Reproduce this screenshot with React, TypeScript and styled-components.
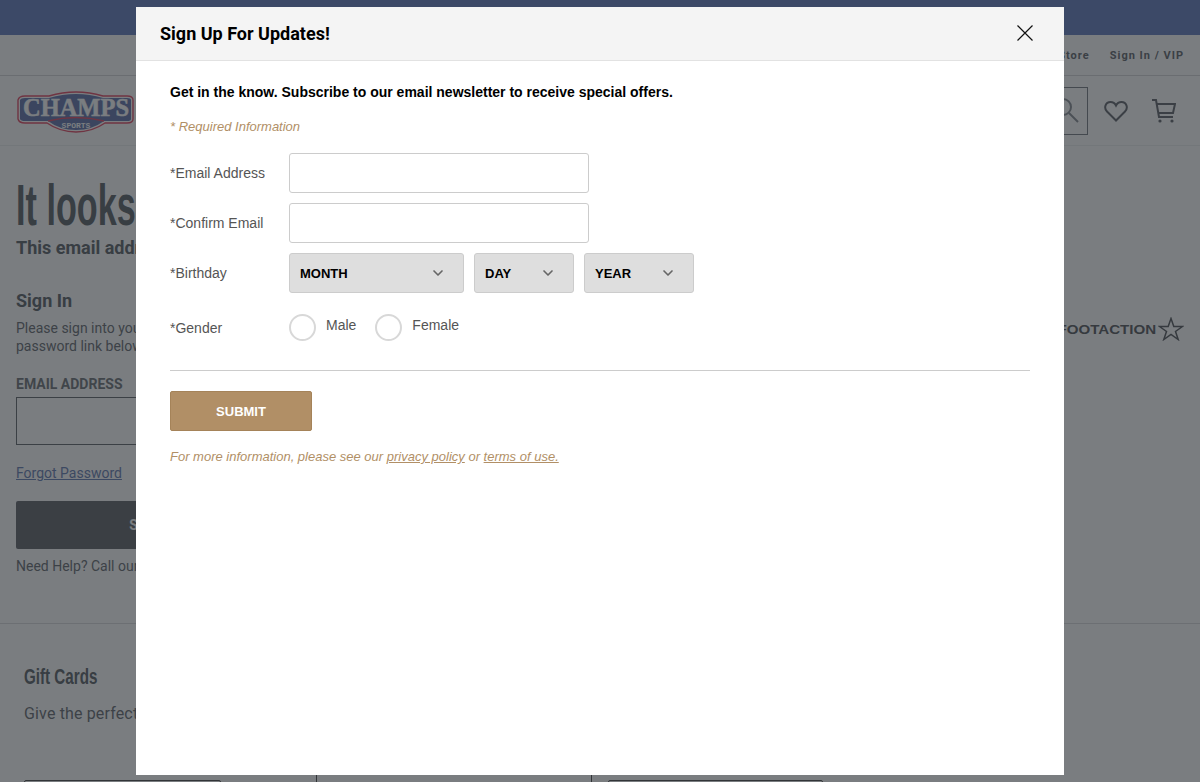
import React from 'react';
import styled, { createGlobalStyle } from 'styled-components';
import { ChevronDown } from 'lucide-react';

const Global = createGlobalStyle`
  html, body { margin: 0; padding: 0; height: 100%; overflow: hidden; background: #fff; }
  * { box-sizing: border-box; }
`;

const Page = styled.div`
  width: 1200px;
  height: 782px;
  overflow: hidden;
  font-family: Roboto, "Liberation Sans", sans-serif;
  color: #444a52;
`;

const Promo = styled.div`
  height: 35px;
  background: #4d6ab8;
`;

const Utility = styled.div`
  height: 41px;
  padding: 0 16px 0 0;
  display: flex;
  align-items: center;
  justify-content: flex-end;
  gap: 20px;
  border-bottom: 1px solid #d0d2d4;
  font-size: 11px;
  font-weight: 700;
  letter-spacing: 1px;
  color: #4a4f57;
`;

const MainNav = styled.div`
  height: 70px;
  padding: 0 24px 0 17px;
  display: flex;
  align-items: center;
  justify-content: space-between;
  border-bottom: 1px solid #eceded;
`;

const NavTools = styled.div`
  display: flex;
  align-items: center;
`;

const SearchBox = styled.div`
  width: 200px;
  height: 48px;
  margin-right: 16px;
  padding-right: 7px;
  border: 1px solid #666b72;
  display: flex;
  align-items: center;
  justify-content: flex-end;
`;

const IconGap = styled.div`
  display: flex;
  align-items: center;
  gap: 24px;
`;

const Content = styled.main`
  height: 478px;
  padding: 0 16px;
  display: flex;
  justify-content: space-between;
  border-bottom: 1px solid #d6d7d9;
`;

const Account = styled.section`
  width: 276px;
  padding-top: 30px;
  white-space: nowrap;
`;

const Headline = styled.h1`
  margin: 0;
  width: max-content;
  height: 58px;
  font-family: "Liberation Sans", sans-serif;
  font-size: 57px;
  line-height: 58px;
  font-weight: 700;
  transform: scaleX(0.6);
  transform-origin: left center;
  color: #444a52;
`;

const Subhead = styled.h2`
  margin: 2px 0 0;
  font-size: 18px;
  line-height: 24px;
  font-weight: 700;
`;

const SignInTitle = styled.h3`
  margin: 29px 0 0;
  font-size: 18px;
  line-height: 24px;
  font-weight: 700;
`;

const Intro = styled.p`
  margin: 6px 0 0;
  font-size: 14px;
  line-height: 18px;
  color: #50555c;
`;

const FieldLabel = styled.div`
  margin-top: 20px;
  font-size: 14px;
  line-height: 18px;
  font-weight: 700;
  color: #5a5f66;
`;

const AccountInput = styled.div`
  height: 48px;
  margin-top: 4px;
  border: 1px solid #4c5157;
`;

const Forgot = styled.a`
  display: block;
  margin-top: 19px;
  font-size: 14px;
  line-height: 18px;
  color: #4f6aa8;
  text-decoration: underline;
`;

const DarkButton = styled.div`
  height: 48px;
  margin-top: 19px;
  border-radius: 2px;
  background: #4a4e55;
  color: #fff;
  font-size: 14px;
  font-weight: 700;
  display: flex;
  align-items: center;
  justify-content: center;
`;

const Help = styled.p`
  margin: 8px 0 0;
  font-size: 14px;
  line-height: 18px;
  color: #50555c;
`;

const Banners = styled.aside`
  margin-top: 171px;
  display: flex;
  align-items: center;
  height: 24px;
  white-space: nowrap;
`;

const FootactionName = styled.span`
  margin-right: 2px;
  font-family: "Liberation Sans", sans-serif;
  font-size: 13.5px;
  font-weight: 700;
  transform: scaleX(1.12);
  transform-origin: right center;
  color: #3c4046;
`;

const Footer = styled.footer`
  padding: 38px 24px 0;
`;

const GiftTitle = styled.h3`
  margin: 0;
  height: 30px;
  font-family: "Liberation Sans", sans-serif;
  font-size: 22px;
  line-height: 30px;
  font-weight: 700;
  white-space: nowrap;
  transform: scaleX(0.69);
  transform-origin: left center;
  color: #444a52;
`;

const GiftText = styled.p`
  margin: 10px 0 0;
  font-size: 16px;
  line-height: 24px;
  letter-spacing: 0.15px;
  color: #50555c;
`;

const FooterRow = styled.div`
  margin-top: 41px;
  display: flex;
`;

const GiftInput = styled.div<{ $width: number; $left: number }>`
  width: ${(p) => p.$width}px;
  margin-left: ${(p) => p.$left}px;
  margin-top: 13px;
  height: 30px;
  border: 1px solid #333;
  border-radius: 2px;
`;

const GiftDivider = styled.div<{ $left: number }>`
  width: 1px;
  height: 30px;
  margin-left: ${(p) => p.$left}px;
  background: #333;
`;

const Overlay = styled.div`
  position: fixed;
  inset: 0;
  background: rgba(50, 55, 60, 0.65);
`;

const Modal = styled.div`
  position: fixed;
  left: 136px;
  top: 7px;
  width: 928px;
  height: 768px;
  background: #fff;
  font-family: "Liberation Sans", Arial, sans-serif;
`;

const ModalHeader = styled.header`
  height: 54px;
  padding: 0 31px 0 24px;
  display: flex;
  align-items: center;
  justify-content: space-between;
  background: #f4f4f4;
  border-bottom: 1px solid #e2e2e2;
`;

const ModalTitle = styled.h2`
  margin: 0;
  font-family: Roboto, sans-serif;
  font-size: 18px;
  font-weight: 700;
  color: #000;
`;

const CloseIcon = styled.svg`
  display: block;
  width: 16px;
  height: 16px;
  margin-bottom: 2px;
`;

const ModalBody = styled.div`
  padding: 23px 34px 0;
`;

const Lead = styled.p`
  margin: 0;
  font-size: 14px;
  line-height: 16px;
  font-weight: 700;
  color: #000;
`;

const Required = styled.p`
  margin: 19px 0 0;
  font-size: 13px;
  line-height: 16px;
  font-style: italic;
  color: #b18f66;
`;

const FormRows = styled.div`
  margin-top: 18px;
  display: flex;
  flex-direction: column;
  gap: 10px;
`;

const FormRow = styled.div`
  display: flex;
  align-items: center;
  min-height: 40px;
`;

const FormLabel = styled.label`
  width: 119px;
  font-size: 14px;
  color: #555;
`;

const TextInput = styled.input`
  width: 300px;
  height: 40px;
  padding: 0 10px;
  background: #fff;
  border: 1px solid #ccc;
  border-radius: 3px;
  outline: none;
`;

const SelectGroup = styled.div`
  display: flex;
  gap: 10px;
`;

const SelectBox = styled.div<{ $width: number }>`
  width: ${(p) => p.$width}px;
  height: 40px;
  padding: 0 17px 0 10px;
  display: flex;
  align-items: center;
  justify-content: space-between;
  background: #dedede;
  border: 1px solid #ccc;
  border-radius: 3px;
  font-size: 13px;
  font-weight: 700;
  color: #000;
`;

const GenderRow = styled(FormRow)`
  margin-top: 11px;
  min-height: 27px;
`;

const RadioOption = styled.label`
  display: flex;
  align-items: flex-start;
  margin-right: 19px;
  font-size: 14px;
  line-height: 16px;
  color: #555;
`;

const RadioCircle = styled.span`
  width: 27px;
  height: 27px;
  margin-right: 10px;
  background: #fff;
  border: 2px solid #d8d8d8;
  border-radius: 50%;
`;

const RadioText = styled.span`
  margin-top: 3px;
`;

const Divider = styled.hr`
  margin: 29px 0 20px;
  border: 0;
  border-top: 1px solid #ccc;
`;

const SubmitButton = styled.button`
  display: block;
  width: 142px;
  height: 40px;
  padding: 0;
  background: #b18f66;
  border: 1px solid #a58359;
  border-radius: 2px;
  color: #fff;
  font-family: "Liberation Sans", Arial, sans-serif;
  font-size: 13px;
  font-weight: 700;
`;

const Note = styled.p`
  margin: 18px 0 0;
  font-size: 13px;
  line-height: 16px;
  font-style: italic;
  color: #b18f66;

  a {
    color: inherit;
    text-decoration: underline;
  }
`;

const ChampsLogo = () => (
  <svg width="118" height="44" viewBox="0 0 118 44">
    <path d="M1 11 Q2 7 8 7 L32 7 Q59 -1 86 7 L110 7 Q116 7 116 11 L116 30 Q116 34 110 34 L88 34 Q75 43 59 43 Q43 43 30 34 L8 34 Q2 34 1 30 Z" fill="#fff" stroke="#e0304f" strokeWidth="1.4" />
    <path d="M3 11 Q4 9 8 9 L32 9 Q59 1 86 9 L110 9 Q114 9 114 11 L114 30 Q114 32 110 32 L87 32 Q75 41 59 41 Q43 41 31 32 L8 32 Q4 32 3 30 Z" fill="#4a60a0" />
    <path d="M31 32 Q59 25 87 32" fill="none" stroke="#e0304f" strokeWidth="1.4" />
    <text x="59" y="27" textAnchor="middle" fontFamily="'Liberation Serif', serif" fontWeight="700" fontSize="26" textLength="106" lengthAdjust="spacingAndGlyphs" fill="#fff" stroke="#fff" strokeWidth="0.5">CHAMPS</text>
    <text x="59" y="38.5" textAnchor="middle" fontFamily="'Liberation Mono', monospace" fontWeight="700" fontSize="8" fill="#fff">SPORTS</text>
  </svg>
);

const SearchIcon = () => (
  <svg width="26" height="30" viewBox="0 0 26 30" fill="none" stroke="#7a7f86" strokeWidth="2">
    <circle cx="9" cy="11" r="8" />
    <path d="M15 17 L24 26" />
  </svg>
);

const HeartIcon = () => (
  <svg width="24" height="22" viewBox="0 0 24 22" fill="none" stroke="#4a4f57" strokeWidth="2">
    <path d="M12 20.5 L3 11.5 C-0.5 8 1.5 2 6.5 2 C9 2 11 3.4 12 5.5 C13 3.4 15 2 17.5 2 C22.5 2 24.5 8 21 11.5 Z" />
  </svg>
);

const CartIcon = () => (
  <svg width="24" height="24" viewBox="0 0 24 24" fill="none" stroke="#4a4f57" strokeWidth="2">
    <path d="M0 1 H4 L7 18 H21" />
    <path d="M5 5 H23 L21 14 H6.5" />
    <circle cx="8" cy="22" r="1.6" fill="#4a4f57" stroke="none" />
    <circle cx="20" cy="22" r="1.6" fill="#4a4f57" stroke="none" />
  </svg>
);

const StarIcon = () => (
  <svg width="26" height="24" viewBox="0 0 26 24" fill="none" stroke="#3c4046" strokeWidth="1.5">
    <path d="M13 1.5 L15.8 9.5 L24.5 9.5 L17.5 14.5 L20.2 22.5 L13 17.5 L5.8 22.5 L8.5 14.5 L1.5 9.5 L10.2 9.5 Z" />
  </svg>
);

const selects = [
  { label: 'MONTH', width: 175 },
  { label: 'DAY', width: 100 },
  { label: 'YEAR', width: 110 },
];

export default function App() {
  return (
    <Page>
      <Global />
      <Promo />
      <Utility>
        <span>Find a Store</span>
        <span>Sign In / VIP</span>
      </Utility>
      <MainNav>
        <ChampsLogo />
        <NavTools>
          <SearchBox>
            <SearchIcon />
          </SearchBox>
          <IconGap>
            <HeartIcon />
            <CartIcon />
          </IconGap>
        </NavTools>
      </MainNav>
      <Content>
        <Account>
          <Headline>It looks</Headline>
          <Subhead>This email address</Subhead>
          <SignInTitle>Sign In</SignInTitle>
          <Intro>
            Please sign into your
            <br />
            password link below
          </Intro>
          <FieldLabel>EMAIL ADDRESS</FieldLabel>
          <AccountInput />
          <Forgot>Forgot Password</Forgot>
          <DarkButton>SIGN IN</DarkButton>
          <Help>Need Help? Call our</Help>
        </Account>
        <Banners>
          <FootactionName>FOOTACTION</FootactionName>
          <StarIcon />
        </Banners>
      </Content>
      <Footer>
        <GiftTitle>Gift Cards</GiftTitle>
        <GiftText>Give the perfect gift</GiftText>
        <FooterRow>
          <GiftInput $width={197} $left={0} />
          <GiftDivider $left={95} />
          <GiftDivider $left={274} />
          <GiftInput $width={215} $left={16} />
        </FooterRow>
      </Footer>
      <Overlay />
      <Modal>
        <ModalHeader>
          <ModalTitle>Sign Up For Updates!</ModalTitle>
          <CloseIcon viewBox="0 0 16 16" fill="none" stroke="#111" strokeWidth="1.2">
            <path d="M0.5 0.5 L15.5 15.5 M15.5 0.5 L0.5 15.5" />
          </CloseIcon>
        </ModalHeader>
        <ModalBody>
          <Lead>Get in the know. Subscribe to our email newsletter to receive special offers.</Lead>
          <Required>* Required Information</Required>
          <FormRows>
            <FormRow>
              <FormLabel>*Email Address</FormLabel>
              <TextInput />
            </FormRow>
            <FormRow>
              <FormLabel>*Confirm Email</FormLabel>
              <TextInput />
            </FormRow>
            <FormRow>
              <FormLabel>*Birthday</FormLabel>
              <SelectGroup>
                {selects.map((s) => (
                  <SelectBox key={s.label} $width={s.width}>
                    {s.label}
                    <ChevronDown size={16} color="#666" strokeWidth={2.5} />
                  </SelectBox>
                ))}
              </SelectGroup>
            </FormRow>
            <GenderRow>
              <FormLabel>*Gender</FormLabel>
              <RadioOption>
                <RadioCircle />
                <RadioText>Male</RadioText>
              </RadioOption>
              <RadioOption>
                <RadioCircle />
                <RadioText>Female</RadioText>
              </RadioOption>
            </GenderRow>
          </FormRows>
          <Divider />
          <SubmitButton>SUBMIT</SubmitButton>
          <Note>
            For more information, please see our <a>privacy policy</a> or <a>terms of use.</a>
          </Note>
        </ModalBody>
      </Modal>
    </Page>
  );
}
